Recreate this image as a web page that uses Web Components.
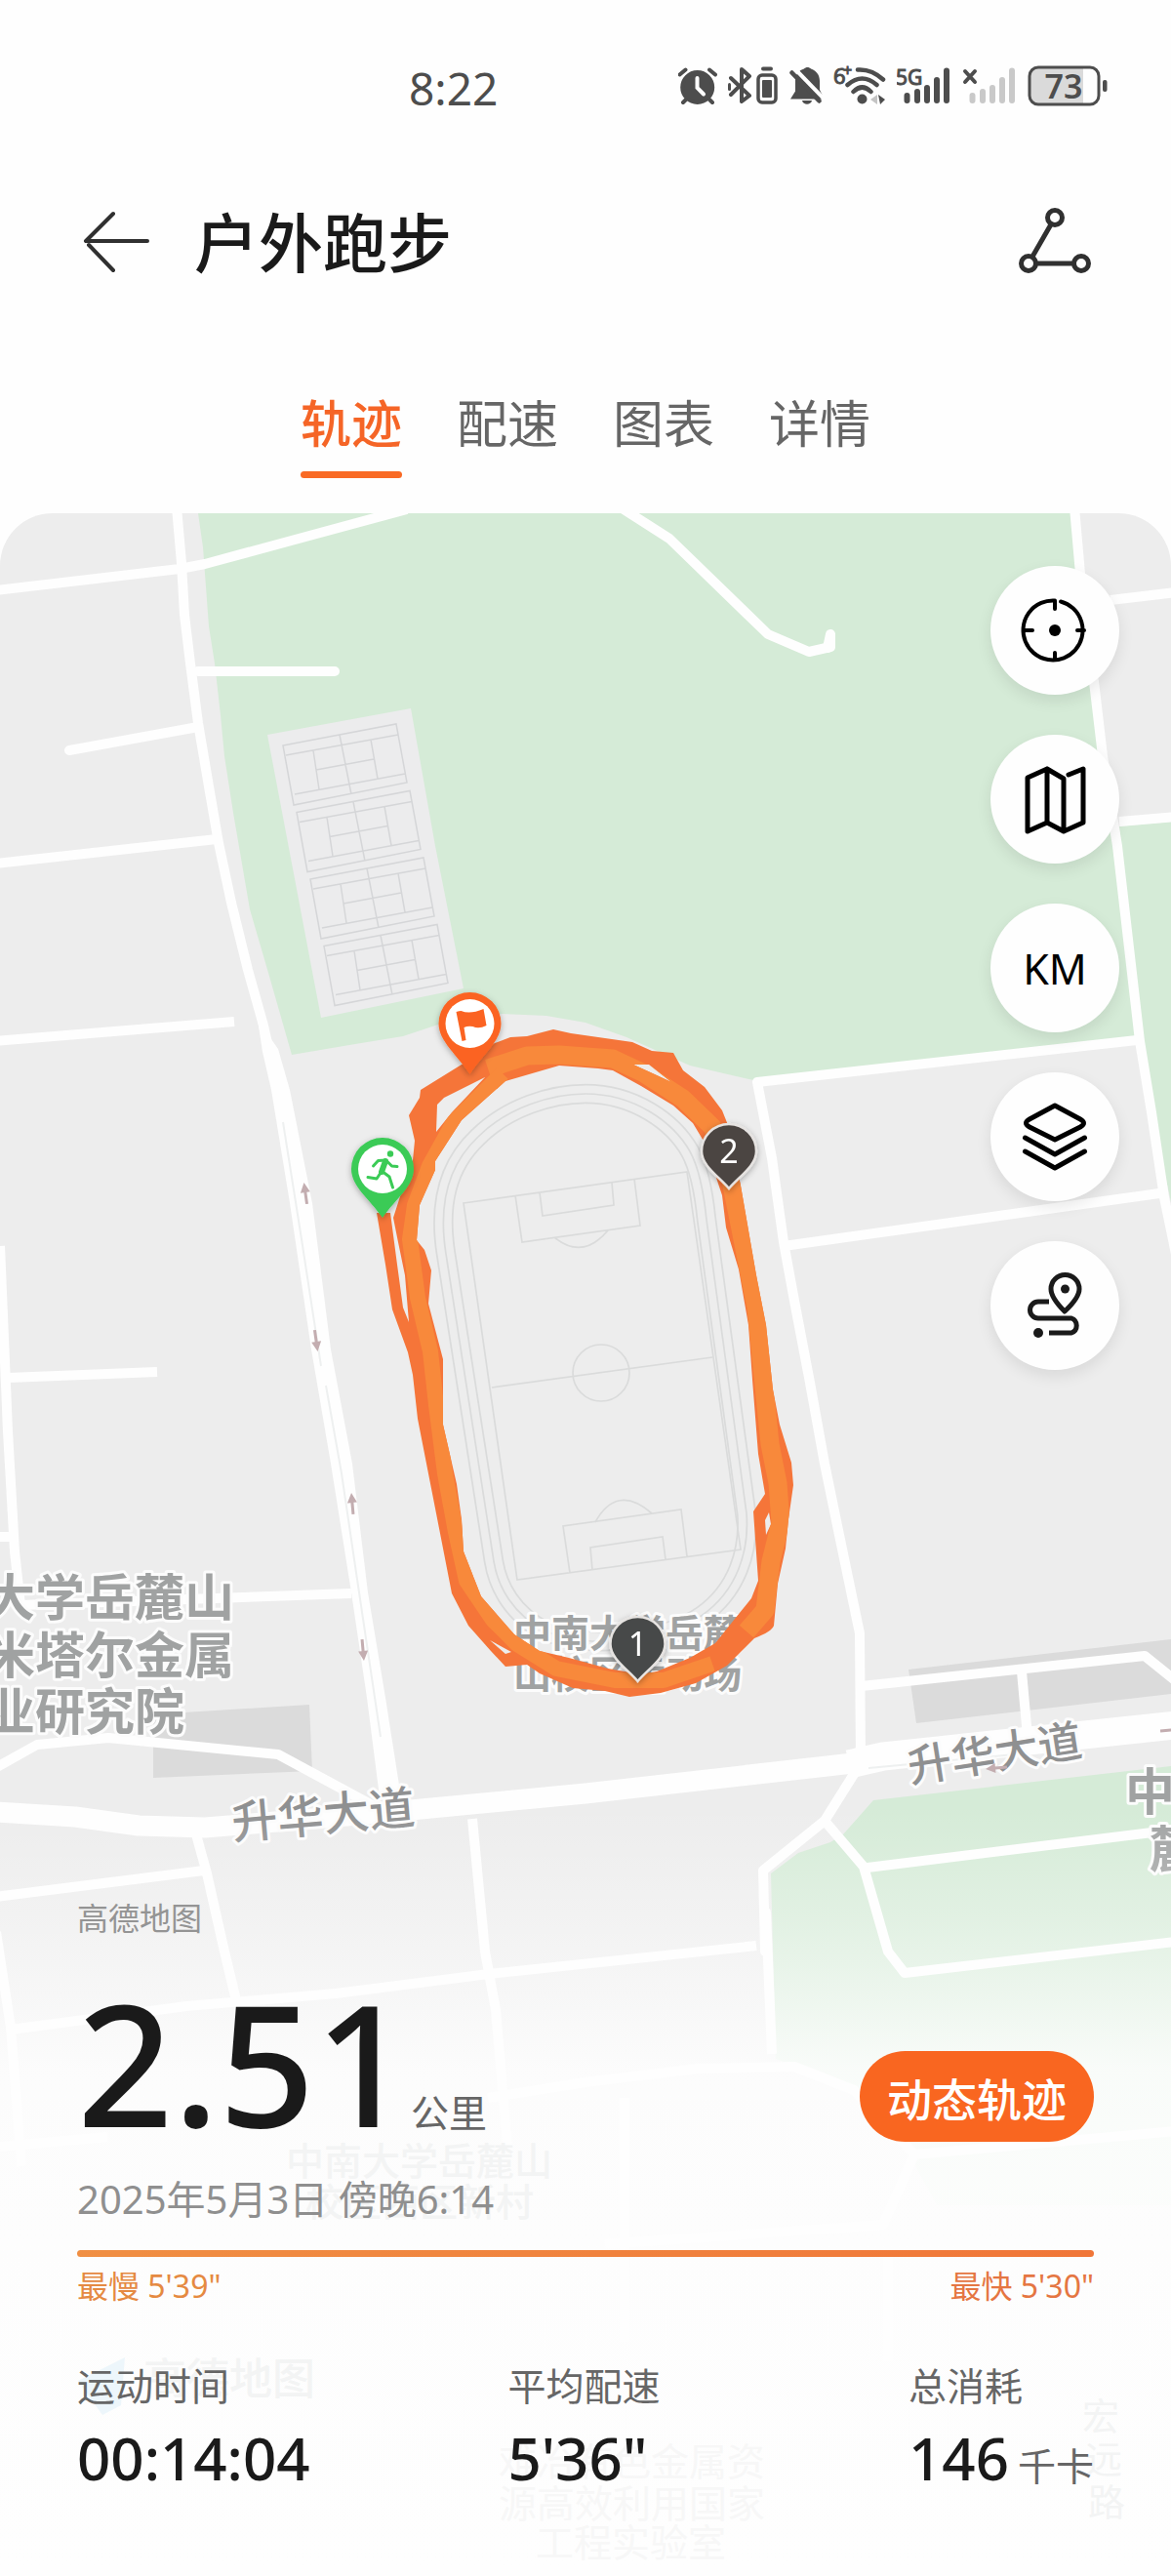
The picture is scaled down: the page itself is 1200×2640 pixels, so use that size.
<!DOCTYPE html>
<html lang="zh-CN">
<head>
<meta charset="utf-8">
<meta name="viewport" content="width=device-width, initial-scale=1">
<title>户外跑步</title>
<style>
  body { margin: 0; background: #fefefe; font-family: "Noto Sans", "Noto Sans CJK SC", sans-serif; color: #1a1a1a; }
</style>
</head>
<body>
<run-app></run-app>

<script>
const define = (name, html) => {
  const tpl = document.createElement('template');
  tpl.innerHTML = html;
  customElements.define(name, class extends HTMLElement {
    constructor() {
      super();
      this.attachShadow({ mode: 'open' }).append(tpl.content.cloneNode(true));
    }
  });
};

/* ---------- status bar ---------- */
define('status-bar', `
<style>
  :host { display: flex; align-items: center; justify-content: space-between; height: 180px; padding: 0 65px 0 419px; box-sizing: border-box; color: #4d4d4d; }
  .time { font-size: 46px; line-height: 60px; }
  .icons { display: flex; gap: 11px; }
  svg { display: block; height: 60px; }
  svg text { font-family: "Noto Sans", sans-serif; fill: currentColor; }
</style>
<span class="time">8:22</span>
<div class="icons">
  <svg width="40" viewBox="9 0 40 60" fill="currentColor" stroke="currentColor" stroke-linecap="round" stroke-width="4">
    <circle cx="28.7" cy="29.5" r="15.5"/><path d="M10.5 16.5l6-5M41 11.5l6 5M17 42l-3 3M41 42l3 3"/>
    <path d="M28.5 20v10l6.500 6.500" fill="none" stroke="#fefefe"/>
  </svg>
  <svg width="52" viewBox="61 0 52 60" fill="none" stroke="currentColor" stroke-width="4" stroke-linejoin="round" stroke-linecap="round">
    <path d="M64 20L83 38l-8 6V11l8 7L64 37" stroke-width="4"/><path d="M62.500 26.500v5" stroke-width="3"/>
    <path d="M97 10.500h8"/><rect x="92" y="17" width="18" height="28" rx="4" stroke-width="3.500"/><rect x="97" y="23" width="8" height="16" fill="currentColor" stroke-width="2"/>
  </svg>
  <svg width="34" viewBox="125 0 34 60" fill="currentColor">
    <path d="M126 41.500l5-8V23c0-7 4-11 9-12.500 2-2 5-2 7 0 5 1.500 9 6 9 12.500v9l3 6v3.500z"/>
    <path d="M138 43h10c-1 5-9 5-10 0z"/>
    <path d="M131 11l30 31" stroke="#fefefe" stroke-width="4"/>
    <path d="M127.500 14.500l28 29" stroke="currentColor" stroke-width="4.500" stroke-linecap="round"/>
  </svg>
  <svg width="54" viewBox="168 0 54 60" fill="none" stroke="currentColor" stroke-width="4.500" stroke-linecap="round">
    <circle cx="197.500" cy="41.500" r="5" fill="currentColor" stroke="none"/>
    <path d="M188.500 34q9-9 18 0M182.500 27q15-13 30 0M193 11.500q14-1 26 10"/>
    <path d="M213 37v10l-7-5z" fill="#c4c4c4" stroke="none"/><path d="M214 37l7 5-5 5z" fill="currentColor" stroke="none"/>
    <text x="168" y="26" font-size="22" stroke="currentColor" stroke-width="1">6</text><text x="178" y="18" font-size="16" stroke="currentColor" stroke-width="1">+</text>
  </svg>
  <svg width="56" viewBox="233 0 56 60" fill="none" stroke="currentColor" stroke-width="6" stroke-linecap="round">
    <path d="M243.500 38v5M254 34v9M264 30v13M274 22v21M284 12.500V43"/>
    <text x="232" y="27" font-size="21" stroke="currentColor" stroke-width="1">5G</text>
  </svg>
  <svg width="56" viewBox="301 0 56 60" fill="none" stroke="#c9c9c9" stroke-width="6" stroke-linecap="round">
    <path d="M311.500 38v5M322 34v9M332 30v13M342 22v21M352 12.500V43"/><path d="M304 13l10 11M314 13L304 24" stroke="currentColor" stroke-width="4"/>
  </svg>
  <svg width="82" viewBox="368 0 82 60">
    <path d="M379 9h46v38h-46q-9 0-9-9V18q0-9 9-9z" fill="#dadada"/>
    <rect x="370" y="9" width="71" height="38" rx="9" fill="none" stroke="currentColor" stroke-width="3"/>
    <rect x="445" y="22" width="4.500" height="12" rx="2" fill="currentColor"/>
    <text x="405" y="40.500" font-size="34" font-weight="600" text-anchor="middle">73</text>
  </svg>
</div>`);

/* ---------- title row ---------- */
define('page-header', `
<style>
  :host { display: flex; align-items: center; height: 136px; padding: 0 79px; }
  button { border: 0; background: none; padding: 0; color: #303030; display: block; }
  svg { display: block; fill: none; stroke: currentColor; stroke-width: 5; stroke-linecap: round; stroke-linejoin: round; }
  h1 { flex: 1; margin: 0 0 0 40px; font-size: 66px; line-height: 80px; font-weight: 500; }
</style>
<button aria-label="返回"><svg width="80" height="80" viewBox="0 0 80 80"><path d="M37 11L9 39h63M12 43l25 26" stroke-width="4"/></svg></button>
<h1><slot></slot></h1>
<button aria-label="分享轨迹"><svg width="80" height="80" viewBox="0 0 80 80"><circle cx="40" cy="15" r="7.500"/><circle cx="13" cy="62" r="7.500"/><circle cx="67" cy="62" r="7.500"/><path d="M36 22L17 55M21 62h38"/></svg></button>`);

/* ---------- tabs ---------- */
define('tab-bar', `
<style>
  :host { display: flex; justify-content: center; gap: 56px; padding: 86px 0 36px; }
</style>
<slot></slot>`);
define('tab-item', `
<style>
  :host { display: block; }
  button { display: flex; flex-direction: column; gap: 17px; border: 0; padding: 0; background: none; font: inherit; font-size: 52px; line-height: 64px; color: #666; }
  button::after { content: ""; height: 7px; width: 100%; border-radius: 4px; }
  :host([active]) button { color: #f56527; font-weight: 500; }
  :host([active]) button::after { background: #f96a25; }
</style>
<button role="tab"><slot></slot></button>`);

/* ---------- round map tool ---------- */
define('map-tool', `
<style>
  :host { display: block; }
  button { display: grid; place-items: center; width: 132px; height: 132px; border: 0; border-radius: 50%; padding: 0; background: #fefefe; color: #000; font: inherit; font-size: 43px; box-shadow: 0 6px 16px rgba(0,0,0,.09); }
</style>
<button><slot></slot></button>`);

/* ---------- map artwork ---------- */
const court = '<path d="M290 764l116-22 11 60-116 23zM293 774l115-21M302 814l113-21M348 753l12 61M321 769l6 40M380 758l7 40M324 789l59-11"/>';
const courts = [0, 1, 2, 3].map(i => `<g transform="translate(${i * 14} ${i * 68.500})">${court}</g>`).join('');
const oval = 'M506 1600L457 1285C449 1235 458 1195 490 1165C520 1135 565 1121 600 1121C650 1121 690 1150 707 1180C718 1200 722 1230 724 1250L765 1551C768 1590 755 1630 720 1655C680 1684 600 1690 560 1672C525 1655 510 1625 506 1600Z';
const band = 'M403 1248L412 1220L423 1189L425 1169L419 1143L430 1125L431 1117L473 1091L507 1069L523 1063L540 1062L567 1055L585 1059L648 1068L668 1077L690 1079L700 1097L722 1114L740 1138L746 1153L759 1215L775 1307L785 1358L792 1424L799 1460L811 1499L813 1522L808 1557L805 1587L797 1623L793 1666Q791 1672 773 1679L745 1707L713 1725L677 1735L645 1739L620 1733L587 1730L553 1715L540 1706L518 1708L503 1692L480 1666L463 1633L447 1551L428 1454L423 1409L418 1386L402 1342L395 1296L386 1243L400 1243L407 1296L413 1340L419 1355L415 1307L408 1273Z'
 + 'M430 1235L446 1199L446 1190L473 1148L518 1108L573 1092L613 1095L628 1097L657 1113L690 1133L710 1151L722 1171L740 1225L744 1258L757 1301L767 1358L771 1414L777 1490L784 1531L772 1549L777 1620L770 1638L753 1659L733 1684L707 1699L673 1713L657 1716L623 1710L583 1699L553 1692L527 1675L513 1659L493 1636L475 1590L473 1557L468 1521L454 1460L454 1393L439 1336L442 1302L435 1281L427 1271Z'
 + 'M448 1132L455 1125L497 1104L463 1140L447 1160ZM649 1091L665 1091L688 1109L673 1102ZM784 1558L788 1550L790 1562L785 1573ZM502 1681L513 1687L524 1693L518 1695Z';

define('route-map', `
<style>
  :host { display: block; position: relative; }
  svg { position: absolute; inset: 0; width: 100%; height: 100%; }
  text { font-family: "Noto Sans", "Noto Sans CJK SC", sans-serif; }
  .road { fill: none; stroke: #fefefe; stroke-width: 10; stroke-linejoin: round; }
  .label text { font-weight: 700; fill: #a0a2a2; stroke: #fcfcfc; stroke-width: 6; paint-order: stroke; stroke-linejoin: round; }
  .label .street { fill: #8f9091; font-weight: 500; }
  .ghost { fill: #f3f4f4; }
  .km text { fill: #fff; font-size: 34px; text-anchor: middle; }
</style>
<svg viewBox="0 526 1200 2114" preserveAspectRatio="xMidYMin slice" role="img" aria-label="跑步轨迹地图">
  <defs>
    <clipPath id="bandClip"><path d="${band}" clip-rule="evenodd"/></clipPath>
    <linearGradient id="veil" x1="0" y1="1850" x2="0" y2="2640" gradientUnits="userSpaceOnUse">
      <stop offset="0" stop-color="#fefefe" stop-opacity="0"/><stop offset=".13" stop-color="#fefefe" stop-opacity=".27"/>
      <stop offset=".2" stop-color="#fefefe" stop-opacity=".45"/><stop offset=".34" stop-color="#fefefe" stop-opacity=".87"/>
      <stop offset=".5" stop-color="#fefefe" stop-opacity=".93"/><stop offset=".8" stop-color="#fefefe" stop-opacity=".98"/><stop offset="1" stop-color="#fefefe"/>
    </linearGradient>
    <filter id="soft" x="-30%" y="-30%" width="160%" height="160%"><feDropShadow dx="0" dy="2" stdDeviation="3" flood-opacity=".3"/></filter>
    <path id="arrow" d="M0-11L5-1H1.500V11H-1.500V-1H-5Z" fill="#c3adb0"/>
  </defs>

  <rect y="526" width="1200" height="2114" fill="#ededed"/>
  <g fill="#d5ebd7">
    <path d="M203 526L208 561L214 642L220 680L226 733L230 775L239 833L256 932L275 997L299 1081L364 1070L413 1062L452 1049L514 1039L560 1041L600 1048L642 1063L707 1092L772 1107L1165 1066L1120 700L1101 526Z"/>
    <path d="M1147 847L1200 842V1232L1180 1140Z"/>
    <path d="M790 1920L818 1899L851 1888L864 1880L895 1845L1200 1810V2260L960 2260L900 2150L795 2110Z"/>
  </g>
  <path d="M274 753L421 726L446 867L475 1013L329 1043Z" fill="#ececed"/>
  <g fill="none" stroke="#d5d6d8" stroke-width="1.500">${courts}</g>
  <g fill="#dbdbdb">
    <path d="M157 1757L317 1747L320 1815L157 1822Z"/><path d="M931 1711L1200 1680V1736L939 1766Z"/>
  </g>

  <g fill="none" stroke="#dadbdb">
    <path d="${oval}" stroke-width="20.500"/><path d="${oval}" stroke="#ededed" stroke-width="17"/><path d="${oval}" stroke-width="1.700"/>
    <path stroke-width="1.700" d="M475 1233L704 1201L759 1588L530 1619ZM504 1422L730 1391M528 1225L535 1273L656 1256L650 1208M553 1222L556 1246L629 1235L627 1212M568 1268Q597 1292 623 1261M584 1612L577 1564L698 1547L704 1595M607 1609L605 1586L679 1575L682 1598M610 1560Q632 1520 668 1551"/>
    <circle cx="616" cy="1407" r="29" stroke-width="1.700"/>
  </g>

  <g class="road">
    <path d="M-5 605L184 583L210 578L306 552L417 522M181 520L186 577L189 630L195 680L203 741L214 806L224 864L237 925L254 994L270 1051L281 1100"/>
    <path d="M203 688H343M71 769L203 745" stroke-linecap="round"/>
    <path d="M-5 885L222 860M-5 1067L240 1047M636 520L686 552L787 650L829 668L851 663V649"/>
    <path d="M848 664L851 650" stroke-linecap="round"/>
    <path d="M1101 520L1107 588L1122 707L1130 775L1145 867L1168 1067L1180 1140L1193 1227L1206 1290M1138 615L1205 607M1147 842L1205 837"/>
    <path d="M1165 1066L776 1109L791 1187L803 1273L814 1333L830 1417L845 1500L860 1573L881 1674L882 1805M803 1277L1188 1223"/>
    <path d="M0 1277L8 1467L15 1590L21 1645L360 1633M8 1412L161 1406M-5 1575H15"/>
    <path d="M-5 1812L38 1788L111 1781L285 1798L385 1852"/>
    <path d="M883 1728L1173 1697L1204 1722M1047 1713L1053 1780"/>
    <path d="M877 1815L845 1866L782 1917L784 2000L785 1960L791 2105M845 1866L885 1913L910 2000L927 2022L1205 1990M889 1914L1205 1875"/>
    <path d="M201 1880L212 1920L230 2000L242 2050M-5 1944L209 1917M484 1864L497 2000L508 2060L520 2200M-4 1980L11 2078L22 2220M11 2080L191 2056L344 2043L501 2023L775 1994"/>
    <path d="M500 2150L600 2134L715 2120L814 2118L875 2142L937 2208L1205 2184M937 2208L905 2280L620 2300M640 2150V2400M910 2310V2420M0 2200L110 2190"/>
    <path d="M-5 1857L77 1862L142 1871L210 1873L344 1862L421 1855L600 1838L883 1806" stroke-width="21"/>
    <path d="M870 1808L905 1800L1205 1768" stroke-width="29"/>
  </g>
  <path d="M264 1045L285 1075L297 1117L320 1233L339 1383L361 1500L377 1632L395 1740L411 1842H389L376 1740L360 1632L339 1500L319 1383L297 1233L278 1117L269 1078Z" fill="#fefefe"/>
  <path d="M290 1150L309 1270L329 1400M334 1420L350 1510L368 1632L390 1780M890 1812L1050 1797" fill="none" stroke="#eef0f0" stroke-width="2"/>
  <use href="#arrow" transform="translate(313 1223) rotate(-8)"/><use href="#arrow" transform="translate(324 1374) rotate(172)"/>
  <use href="#arrow" transform="translate(361 1541) rotate(-5)"/><use href="#arrow" transform="translate(372 1691) rotate(175)"/>
  <use href="#arrow" transform="translate(1200 1773) rotate(85)"/>

  <g class="label">
    <g font-size="51"><text x="-15" y="1656">大学岳麓山</text><text x="-15" y="1715">米塔尔金属</text><text x="-15" y="1773">业研究院</text>
      <text x="1153" y="1855">中</text><text x="1178" y="1914">麓</text></g>
    <g font-size="39"><text x="526" y="1688">中南大学岳麓</text><text x="526" y="1730">山校区运动场</text></g>
    <g font-size="47"><text class="street" transform="translate(239 1885) rotate(-5)">升华大道</text></g>
    <g font-size="45"><text class="street" transform="translate(933 1827) rotate(-9)">升华大道</text></g>
  </g>
  <use href="#arrow" transform="translate(1021 1812) rotate(-95)"/>

  <path d="${band}" fill="#f57539" fill-rule="evenodd"/>
  <g clip-path="url(#bandClip)" fill="none" stroke="#f8893b" stroke-linejoin="round">
    <path stroke-width="19" d="M500 1095L540 1082L573 1081L628 1085L660 1100L700 1126L730 1155L747 1200L760 1265L775 1340L783 1420L789 1480L797 1520L800 1560L790 1600L784 1650L765 1672"/>
    <path stroke-width="16" d="M515 1100L465 1150L440 1195L425 1235L420 1270L428 1330L441 1385L447 1440L456 1510L467 1570L478 1620L505 1660L530 1685L570 1710L630 1722L680 1722L730 1705"/>
  </g>

  <g filter="url(#soft)">
    <path d="M481.500 1017a32 32 0 0 1 32 32c0 18-19 32-32 52-13-20-32-34-32-52a32 32 0 0 1 32-32z" fill="#fb6420"/><circle cx="481.500" cy="1049" r="25" fill="#fff"/>
    <path d="M467.500 1037q3-1 5-1 9 4 23-2l3 17q-8 4-14 1-5-1-9 1l2 13-4 1z" fill="#fb6420"/>
  </g>
  <g filter="url(#soft)">
    <path d="M392 1166a32 32 0 0 1 32 32c0 18-19 31-32 50-13-19-32-32-32-50a32 32 0 0 1 32-32z" fill="#3bcb56"/><circle cx="392" cy="1198" r="25" fill="#fff"/>
    <circle cx="400" cy="1182.500" r="3.200" fill="#3bcb56"/>
    <g fill="none" stroke="#3bcb56" stroke-linecap="round" stroke-linejoin="round"><path d="M395 1190l-4 11" stroke-width="6"/><path d="M382.500 1195l5-5.500 8-.5 6 6 5.500.5M391 1200l8 6 3.500 11M390 1202l-4 6-9-1.500" stroke-width="3"/></g>
  </g>
  <g class="km" filter="url(#soft)">
    <path d="M747 1152a28 28 0 0 1 28 28c0 15-18 26-28 38-10-12-28-23-28-38a28 28 0 0 1 28-28z" fill="#4b4542" stroke="#e6e3e1" stroke-width="2.500"/><text x="747" y="1192">2</text>
    <path d="M653.500 1657a28 28 0 0 1 28 28c0 15-18 26-28 38-10-12-28-23-28-38a28 28 0 0 1 28-28z" fill="#464948" stroke="#e6e3e1" stroke-width="2.500"/><text x="653.500" y="1697">1</text>
  </g>

  <rect y="1850" width="1200" height="790" fill="url(#veil)"/>
  <g class="ghost">
    <g font-size="39" font-weight="500"><text x="293" y="2229">中南大学岳麓山</text><text x="313" y="2271">校区西区新村</text></g>
    <path d="M80 2440L128 2416L124 2465L105 2475Z" fill="#edf6fb"/>
    <text x="147" y="2454" font-size="44" font-weight="500">高德地图</text>
    <g font-size="39" fill="#f7f7f7"><text x="511" y="2537">难冶有色金属资</text><text x="511" y="2580">源高效利用国家</text><text x="549" y="2620">工程实验室</text></g>
    <g font-size="38"><text x="1109" y="2490">宏</text><text x="1112" y="2534">远</text><text x="1115" y="2578">路</text></g>
  </g>
</svg>`);

/* ---------- summary ---------- */
define('stat-item', `
<style>
  :host { display: block; }
  .name { font-size: 39px; line-height: 48px; color: #666; }
  .value { margin-top: 18px; font-size: 60px; line-height: 64px; font-weight: 500; white-space: nowrap; }
  ::slotted(small) { font-size: 39px; font-weight: 400; color: #666; margin-left: 9px; }
</style>
<div class="name"><slot name="name"></slot></div>
<div class="value"><slot></slot></div>`);

define('run-summary', `
<style>
  :host { display: block; padding: 0 79px 81px; }
  .source { font-size: 32px; line-height: 44px; color: #949494; }
  .main { display: flex; justify-content: space-between; align-items: flex-end; margin-top: 43px; }
  .distance { display: flex; align-items: baseline; font-size: 172px; line-height: 164px; font-weight: 500; }
  .distance small { font-size: 39px; line-height: 48px; font-weight: 400; color: #666; }
  button { height: 93px; padding: 0 28px; border: 0; border-radius: 47px; background: #f96620; color: #fff; font: inherit; font-size: 46px; font-weight: 500; }
  .date { margin-top: 35px; font-size: 40px; line-height: 48px; color: #8f8f8f; }
  .bar { height: 7px; margin-top: 28px; border-radius: 4px; background: linear-gradient(90deg, #f08f43, #f07638); }
  .range { display: flex; justify-content: space-between; margin-top: 10px; font-size: 32px; line-height: 40px; color: #e58a42; }
  .range span + span { color: #e57642; }
  .stats { display: grid; grid-template-columns: 441fr 410fr auto; margin-top: 58px; }
</style>
<div class="source">高德地图</div>
<div class="main"><div class="distance">2.51<small>公里</small></div><button>动态轨迹</button></div>
<div class="date">2025年5月3日 傍晚6:14</div>
<div class="bar"></div>
<div class="range"><span>最慢 5'39"</span><span>最快 5'30"</span></div>
<div class="stats">
  <stat-item><span slot="name">运动时间</span>00:14:04</stat-item>
  <stat-item><span slot="name">平均配速</span>5'36"</stat-item>
  <stat-item><span slot="name">总消耗</span>146<small>千卡</small></stat-item>
</div>`);

/* ---------- page ---------- */
define('run-app', `
<style>
  :host { display: flex; flex-direction: column; min-height: 100vh; }
  main { flex: 1; display: grid; border-radius: 54px 54px 0 0; overflow: hidden; }
  main > * { grid-area: 1 / 1; min-width: 0; }
  .over { display: flex; flex-direction: column; justify-content: space-between; position: relative; }
  nav { align-self: flex-end; display: flex; flex-direction: column; gap: 41px; padding: 54px 53px 0 0; }
  nav svg { display: block; fill: none; stroke: #000; stroke-width: 5; stroke-linecap: round; stroke-linejoin: round; }
</style>
<status-bar></status-bar>
<page-header>户外跑步</page-header>
<tab-bar><tab-item active>轨迹</tab-item><tab-item>配速</tab-item><tab-item>图表</tab-item><tab-item>详情</tab-item></tab-bar>
<main>
  <route-map></route-map>
  <div class="over">
    <nav aria-label="地图工具">
      <map-tool><svg width="80" height="80" viewBox="0 0 80 80"><path d="M46 10.500A30.500 30.500 0 1 1 40 9.500V18M10 40h7M70 40h-7M40 70v-7" stroke-width="4"/><circle cx="40" cy="40" r="6" fill="#000" stroke="none"/></svg></map-tool>
      <map-tool><svg width="80" height="80" viewBox="0 0 80 80"><path d="M32 9L12 18V73L32 64L49 73V19ZM32 9V64M54 15L69 9V64L49 73"/></svg></map-tool>
      <map-tool>KM</map-tool>
      <map-tool><svg width="80" height="80" viewBox="0 0 80 80"><path d="M40 8L66 22Q73 26 66 30L40 43L14 30Q7 26 14 22ZM9.500 41L40 58L70.500 41M9.500 55L40 72L70.500 55"/></svg></map-tool>
      <map-tool><svg width="80" height="80" viewBox="0 0 80 80" style="stroke:#1a1a1a"><path d="M50 46Q36 32 36 23a14.500 14.500 0 0 1 29 0Q65 32 50 46Z"/><circle cx="50.500" cy="23" r="4.500" fill="#1a1a1a" stroke="none"/><path d="M34 36H23a8 8 0 0 0 0 17H57a8 8 0 0 1 0 15H34" stroke-linecap="butt"/><circle cx="23" cy="68" r="5" fill="#1a1a1a" stroke="none"/></svg></map-tool>
    </nav>
    <run-summary></run-summary>
  </div>
</main>`);
</script>
</body>
</html>
